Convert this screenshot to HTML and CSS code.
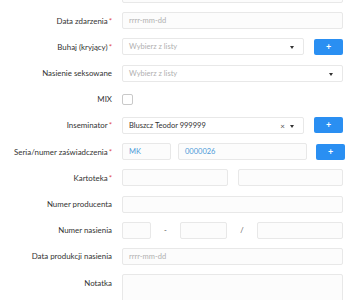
FILE: index.html
```html
<!DOCTYPE html>
<html lang="pl">
<head>
<meta charset="utf-8">
<link rel="stylesheet" href="styles.css">
</head>
<body>
<form class="form">
  <div class="row"><div class="label"></div><div class="ctrl"><div class="input"></div></div></div>
  <div class="row"><div class="label">Data zdarzenia<span class="req">*</span></div><div class="ctrl"><div class="input ph">rrrr-mm-dd</div></div></div>
  <div class="row"><div class="label">Buhaj (kryjący)<span class="req">*</span></div><div class="ctrl with-btn"><div class="input select ph">Wybierz z listy<span class="caret"></span></div><div class="btn">+</div></div></div>
  <div class="row"><div class="label">Nasienie seksowane</div><div class="ctrl"><div class="input select ph">Wybierz z listy<span class="caret"></span></div></div></div>
  <div class="row"><div class="label">MIX</div><div class="ctrl"><span class="check"></span></div></div>
  <div class="row"><div class="label">Inseminator<span class="req">*</span></div><div class="ctrl with-btn"><div class="input select val">Bluszcz Teodor 999999<span class="clear">×</span><span class="caret"></span></div><div class="btn">+</div></div></div>
  <div class="row"><div class="label">Seria/numer zaświadczenia<span class="req">*</span></div><div class="ctrl seria"><div class="input blue">MK</div><div class="input blue">0000026</div><div class="btn">+</div></div></div>
  <div class="row"><div class="label">Kartoteka<span class="req">*</span></div><div class="ctrl halves"><div class="input"></div><div class="input"></div></div></div>
  <div class="row"><div class="label">Numer producenta</div><div class="ctrl"><div class="input"></div></div></div>
  <div class="row"><div class="label">Numer nasienia</div><div class="ctrl numer"><div class="input"></div><span class="sep">-</span><div class="input"></div><span class="sep">/</span><div class="input"></div></div></div>
  <div class="row"><div class="label">Data produkcji nasienia</div><div class="ctrl"><div class="input ph">rrrr-mm-dd</div></div></div>
  <div class="row note"><div class="label">Notatka</div><div class="ctrl"><div class="input area"></div></div></div>
</form>
</body>
</html>
```
FILE: styles.css
```css
html, body {
  margin: 0;
  padding: 0;
  background: #fff;
  overflow: hidden;
}
body {
  font-family: Lato, "Liberation Sans", sans-serif;
  font-size: 7.5px;
  color: #444;
}
.form {
  margin-top: -14px;
  padding-right: 17px;
  display: flex;
  flex-direction: column;
  gap: 9.2px;
}
.row {
  display: grid;
  grid-template-columns: 112px 1fr;
  column-gap: 10px;
  align-items: center;
  height: 17px;
}
.row.note {
  align-items: start;
  height: 60px;
}
.row.note .label {
  padding-top: 4px;
}
.label {
  text-align: right;
  white-space: nowrap;
  color: #333;
  font-size: 7.9px;
}
.req {
  color: #e0474c;
  margin-left: 1px;
}
.ctrl {
  display: flex;
  align-items: center;
  height: 17px;
}
.input {
  box-sizing: border-box;
  height: 17px;
  width: 100%;
  border: 1px solid #e8e8e8;
  border-radius: 2px;
  background: #fcfcfc;
  padding: 0 6px;
  display: flex;
  align-items: center;
  position: relative;
  white-space: nowrap;
}
.ph { color: #b0b0b0; }
.val { color: #333; background: #fff; }
.blue { color: #4d9ad8; }
.select { background: #fff; }
.caret {
  position: absolute;
  right: 9px;
  top: 7px;
  width: 0;
  height: 0;
  border-left: 2.5px solid transparent;
  border-right: 2.5px solid transparent;
  border-top: 3px solid #333;
}
.clear {
  position: absolute;
  right: 18px;
  top: 3px;
  font-size: 8px;
  color: #555;
}
.with-btn { gap: 10px; }
.with-btn .input { flex: 1; }
.btn {
  flex: 0 0 29px;
  width: 29px;
  height: 16px;
  background: #2a8ff2;
  border-radius: 2px;
  color: #fff;
  font-weight: 700;
  font-size: 9px;
  line-height: 16px;
  text-align: center;
}
.check {
  box-sizing: border-box;
  width: 11px;
  height: 11px;
  border: 1px solid #c9c9c9;
  border-radius: 2px;
  background: #fff;
}
.seria {
  display: grid;
  grid-template-columns: 49px 1fr 29px;
  column-gap: 7px;
}
.seria .btn { margin-left: 2px; }
.halves {
  display: grid;
  grid-template-columns: 1fr 1fr;
  column-gap: 10px;
}
.numer {
  display: grid;
  grid-template-columns: 29px 29px 47px 30px 1fr;
}
.sep {
  text-align: center;
  color: #555;
}
.input.area {
  height: 60px;
  align-items: flex-start;
}
.note .ctrl { height: 60px; }
```
